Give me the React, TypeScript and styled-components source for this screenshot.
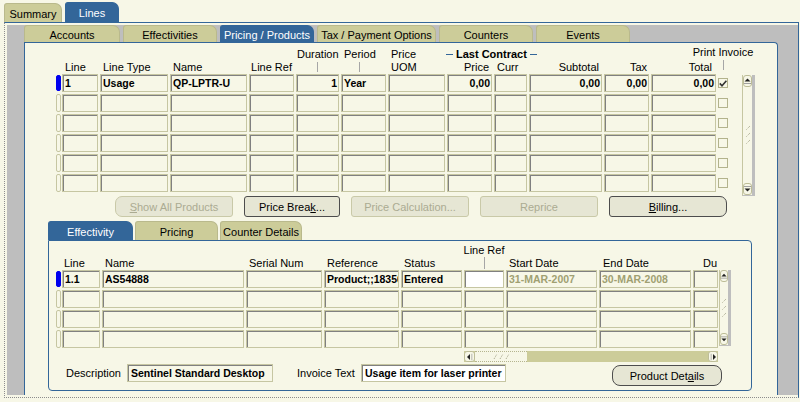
import React from "react";
import styled, { createGlobalStyle } from "styled-components";

const cream = "#f7f7e7";
const khaki = "#cccc99";
const blue = "#336699";
const gray = "#bebebe";
const edge = "#c6c6a2";
const shade = "#808080";

const UPPER_COLS = "4px 36px 68px 77px 45px 43px 45px 57px 45px 33px 73px 45px 65px 10px";
const LOWER_COLS = "4px 38px 142px 76px 75px 61px 40px 91px 92px 25px";

type CellData = { text?: string; right?: boolean; muted?: boolean; white?: boolean };

const UPPER_FIRST: CellData[] = [
  { text: "1" },
  { text: "Usage" },
  { text: "QP-LPTR-U" },
  {},
  { text: "1", right: true },
  { text: "Year" },
  {},
  { text: "0,00", right: true },
  {},
  { text: "0,00", right: true },
  { text: "0,00", right: true },
  { text: "0,00", right: true },
];
const UPPER_BLANK: CellData[] = Array.from({ length: 12 }, () => ({}));

const LOWER_FIRST: CellData[] = [
  { text: "1.1" },
  { text: "AS54888" },
  {},
  { text: "Product;;18356" },
  { text: "Entered" },
  { white: true },
  { text: "31-MAR-2007", muted: true },
  { text: "30-MAR-2008", muted: true },
  {},
];
const LOWER_BLANK: CellData[] = Array.from({ length: 9 }, () => ({}));

const TOP_TABS = [
  { label: "Summary", w: 58, h: 19 },
  { label: "Lines", w: 54, h: 20, active: true },
];
const MAIN_TABS = [
  { label: "Accounts", w: 96 },
  { label: "Effectivities", w: 94 },
  { label: "Pricing / Products", w: 94, active: true },
  { label: "Tax / Payment Options", w: 119 },
  { label: "Counters", w: 94 },
  { label: "Events", w: 94 },
];
const SUB_TABS = [
  { label: "Effectivity", w: 85, active: true },
  { label: "Pricing", w: 83 },
  { label: "Counter Details", w: 82 },
];

const GlobalStyle = createGlobalStyle`
  * { box-sizing: border-box; }
  html, body { margin: 0; padding: 0; background: ${cream}; }
  body {
    font-family: "Liberation Sans", Arial, Helvetica, sans-serif;
    font-size: 11px;
    color: #000;
  }
`;

const Page = styled.div`
  width: 800px;
  height: 402px;
  padding: 2px 0 0 4px;
  overflow: hidden;
`;

const TabStrip = styled.div<{ $h: number; $gap: number; $indent?: number; $top?: number }>`
  display: flex;
  align-items: flex-end;
  gap: ${(p) => p.$gap}px;
  height: ${(p) => p.$h}px;
  margin: ${(p) => p.$top ?? 0}px 0 0 ${(p) => p.$indent ?? 0}px;
  flex-shrink: 0;
`;

const Tab = styled.div<{ $w: number; $h: number; $active?: boolean }>`
  display: flex;
  align-items: center;
  justify-content: center;
  width: ${(p) => p.$w}px;
  height: ${(p) => p.$h}px;
  padding-top: 1px;
  background: ${(p) => (p.$active ? blue : khaki)};
  color: ${(p) => (p.$active ? "#fff" : "#000")};
  border: 1px solid ${(p) => (p.$active ? blue : "#b9b98c")};
  border-bottom: none;
  border-radius: 3px 7px 0 0;
  white-space: nowrap;
`;

const Frame = styled.div`
  display: flex;
  width: 795px;
  height: 376px;
  padding: 2px 0 2px 2px;
  border-top: 1px solid ${blue};
  border-right: 1px solid ${blue};
  border-left: 1px dotted #8c8c8c;
  border-bottom: 1px dotted #8c8c8c;
`;

const Backdrop = styled.div`
  flex: 1;
  display: flex;
  flex-direction: column;
  padding: 0 20px 0 17px;
  background: ${gray};
`;

const Panel = styled.div`
  flex: 1;
  display: flex;
  flex-direction: column;
  background: ${cream};
  border: 1px solid ${blue};
  border-bottom: none;
  border-top-right-radius: 4px;
`;

const HeadGrid = styled.div<{ $cols: string; $indent: number; $h: number; $top: number }>`
  display: grid;
  grid-template-columns: ${(p) => p.$cols};
  grid-template-rows: 13px 13px;
  column-gap: 2px;
  height: ${(p) => p.$h}px;
  padding-top: ${(p) => p.$top}px;
  margin-left: ${(p) => p.$indent}px;
  flex-shrink: 0;
`;

const Head = styled.div<{ $col: number; $row?: number; $right?: boolean; $pad?: number }>`
  grid-column: ${(p) => p.$col};
  grid-row: ${(p) => p.$row ?? 2};
  justify-self: ${(p) => (p.$right ? "end" : "start")};
  ${(p) => (p.$right ? "padding-right" : "padding-left")}: ${(p) => p.$pad ?? 3}px;
  line-height: 13px;
  white-space: nowrap;
`;

const Stack = styled.div<{ $col: number; $pad?: number; $center?: boolean; $lift?: number }>`
  grid-column: ${(p) => p.$col};
  grid-row: 1 / span 2;
  justify-self: ${(p) => (p.$center ? "center" : "start")};
  margin-left: ${(p) => p.$pad ?? 0}px;
  margin-top: ${(p) => -(p.$lift ?? 0)}px;
  display: flex;
  flex-direction: column;
  align-items: center;
  line-height: 13px;
  white-space: nowrap;
`;

const Tick = styled.span<{ $h?: number; $gap?: number }>`
  width: 1px;
  height: ${(p) => p.$h ?? 10}px;
  margin-top: ${(p) => p.$gap ?? 1}px;
  background: #a6a6a6;
`;

const Group = styled.div<{ $col: number }>`
  grid-column: ${(p) => p.$col} / span 2;
  grid-row: 1;
  justify-self: start;
  margin-left: -1px;
  display: flex;
  align-items: center;
  gap: 3px;
  font-weight: bold;
  line-height: 13px;
  white-space: nowrap;
`;

const Dash = styled.span`
  width: 7px;
  height: 1px;
  background: ${blue};
`;

const TableBody = styled.div<{ $indent: number }>`
  display: flex;
  align-items: flex-start;
  margin-left: ${(p) => p.$indent}px;
  flex-shrink: 0;
`;

const Rows = styled.div`
  display: flex;
  flex-direction: column;
  gap: 2px;
`;

const RowGrid = styled.div<{ $cols: string }>`
  display: grid;
  grid-template-columns: ${(p) => p.$cols};
  column-gap: 2px;
  height: 18px;
`;

const Marker = styled.div<{ $on?: boolean }>`
  width: 5px;
  height: ${(p) => (p.$on ? 16 : 18)}px;
  align-self: center;
  border: 1px solid ${(p) => (p.$on ? "#0000ee" : edge)};
  border-radius: 2px;
  background: ${(p) => (p.$on ? "#0000ee" : cream)};
`;

const Cell = styled.div<{ $right?: boolean; $muted?: boolean; $white?: boolean }>`
  height: 18px;
  padding: 0 1px 0 2px;
  border: 1px solid ${edge};
  box-shadow: inset 1px 1px 0 ${shade};
  background: ${(p) => (p.$white ? "#fff" : cream)};
  color: ${(p) => (p.$muted ? "#a0a072" : "#000")};
  font-size: 10.5px;
  font-weight: bold;
  line-height: 16px;
  text-align: ${(p) => (p.$right ? "right" : "left")};
  white-space: nowrap;
  overflow: hidden;
`;

const Check = styled.div`
  width: 10px;
  height: 10px;
  align-self: center;
  display: flex;
  align-items: center;
  justify-content: center;
  border: 1px solid #b3b38c;
  background: ${cream};
`;

const VScroll = styled.div<{ $w: number; $h: number; $left: number; $top?: number }>`
  display: flex;
  flex-direction: column;
  flex-shrink: 0;
  width: ${(p) => p.$w}px;
  height: ${(p) => p.$h}px;
  margin: ${(p) => p.$top ?? 0}px 0 0 ${(p) => p.$left}px;
  background: ${cream};
  border-left: 1px solid ${edge};
  border-right: 3px solid ${gray};
  border-bottom: 1px solid ${gray};
`;

const ArrowBox = styled.div<{ $w?: number; $h: number }>`
  display: flex;
  align-items: center;
  justify-content: center;
  flex-shrink: 0;
  width: ${(p) => (p.$w ? `${p.$w}px` : "100%")};
  height: ${(p) => p.$h}px;
  background: ${cream};
  border: 1px solid #bdbd98;
  border-radius: 3px;
`;

const Track = styled.div`
  flex: 1;
  display: flex;
  align-items: center;
  justify-content: center;
`;

const HScroll = styled.div`
  display: flex;
  width: 254px;
  height: 11px;
  margin: 3px 0 0 415px;
  background: ${khaki};
  flex-shrink: 0;
`;

const HThumb = styled.div`
  display: flex;
  align-items: center;
  justify-content: center;
  width: 52px;
  background: ${cream};
  border-top: 1px dotted #b5b58f;
  border-bottom: 1px dotted #b5b58f;
`;

const ArrowSvg = styled.svg<{ $rot: number }>`
  display: block;
  transform: rotate(${(p) => p.$rot}deg);
`;

const ButtonBar = styled.div<{ $indent: number }>`
  display: flex;
  gap: 11px;
  height: 21px;
  margin-left: ${(p) => p.$indent}px;
  flex-shrink: 0;
`;

const Button = styled.button<{ $w: number; $off?: boolean; $radius?: string; $left?: number; $top?: number }>`
  width: ${(p) => p.$w}px;
  height: 21px;
  margin: ${(p) => p.$top ?? 0}px 0 0 ${(p) => p.$left ?? 0}px;
  padding: 0;
  font-family: inherit;
  font-size: 11px;
  color: ${(p) => (p.$off ? "#abab92" : "#000")};
  background: #e6e6d4;
  border: 1px solid ${(p) => (p.$off ? "#c9c9a8" : "#4d4d4d")};
  border-radius: ${(p) => p.$radius ?? "3px"};
  flex-shrink: 0;
  cursor: default;
`;

const SubPanel = styled.div`
  display: flex;
  flex-direction: column;
  width: 704px;
  height: 151px;
  margin-left: 23px;
  border: 1px solid ${blue};
  border-radius: 0 4px 4px 4px;
  flex-shrink: 0;
`;

const Footer = styled.div`
  display: flex;
  align-items: flex-start;
  margin-top: 2px;
`;

const Label = styled.div<{ $w: number; $left?: number }>`
  width: ${(p) => p.$w}px;
  margin-left: ${(p) => p.$left ?? 0}px;
  line-height: 18px;
  text-align: right;
  white-space: nowrap;
`;

const Field = styled(Cell)<{ $w: number; $left: number }>`
  width: ${(p) => p.$w}px;
  margin-left: ${(p) => p.$left}px;
  padding-left: 3px;
  flex-shrink: 0;
`;

const Arrow = ({ rot }: { rot: number }) => (
  <ArrowSvg $rot={rot} width="7" height="6" viewBox="0 0 7 6">
    <path d="M0.5 3.5 L3.5 0.5 L6.5 3.5 Z" fill="#222" />
    <rect x="0" y="5" width="7" height="1" fill="#a0a0a0" />
  </ArrowSvg>
);

const GripV = () => (
  <svg width="6" height="20" viewBox="0 0 6 20">
    <path
      d="M5 1 L1 5 M5 8 L1 12 M5 15 L1 19"
      stroke="#a3a388"
      strokeWidth="1"
      strokeDasharray="1 1"
      fill="none"
    />
  </svg>
);

const GripH = () => (
  <svg width="18" height="7" viewBox="0 0 18 7">
    <path
      d="M2 6 L5 1 M8 6 L11 1 M14 6 L17 1"
      stroke="#a3a388"
      strokeWidth="1"
      strokeDasharray="1 1"
      fill="none"
    />
  </svg>
);

const CheckMark = () => (
  <svg width="8" height="7" viewBox="0 0 8 7">
    <path d="M0.8 3.4 L3 5.8 L7.4 0.8" fill="none" stroke="#333" strokeWidth="1.6" />
  </svg>
);

const Scrollbar = ({ w, h, left, top }: { w: number; h: number; left: number; top?: number }) => (
  <VScroll $w={w} $h={h} $left={left} $top={top}>
    <ArrowBox $h={12}>
      <Arrow rot={0} />
    </ArrowBox>
    <Track>
      <GripV />
    </Track>
    <ArrowBox $h={12}>
      <Arrow rot={180} />
    </ArrowBox>
  </VScroll>
);

const App = () => {
  return (
    <>
      <GlobalStyle />
      <Page>
        <TabStrip $h={20} $gap={3}>
          {TOP_TABS.map((t) => (
            <Tab key={t.label} $w={t.w} $h={t.h} $active={t.active}>
              {t.label}
            </Tab>
          ))}
        </TabStrip>
        <Frame>
          <Backdrop>
            <TabStrip $h={17} $gap={3}>
              {MAIN_TABS.map((t) => (
                <Tab key={t.label} $w={t.w} $h={17} $active={t.active}>
                  {t.label}
                </Tab>
              ))}
            </TabStrip>
            <Panel>
              <HeadGrid $cols={UPPER_COLS} $indent={31} $h={31} $top={5}>
                <Head $col={2}>Line</Head>
                <Head $col={3}>Line Type</Head>
                <Head $col={4}>Name</Head>
                <Head $col={5} $right $pad={2}>
                  Line Ref
                </Head>
                <Stack $col={6} $pad={1}>
                  Duration
                  <Tick />
                </Stack>
                <Stack $col={7} $pad={3}>
                  Period
                  <Tick />
                </Stack>
                <Head $col={8} $row={1}>
                  Price
                </Head>
                <Head $col={8}>UOM</Head>
                <Group $col={9}>
                  <Dash />
                  Last Contract
                  <Dash />
                </Group>
                <Head $col={9} $right>
                  Price
                </Head>
                <Head $col={10}>Curr</Head>
                <Head $col={11} $right>
                  Subtotal
                </Head>
                <Head $col={12} $right $pad={2}>
                  Tax
                </Head>
                <Head $col={13} $right $pad={4}>
                  Total
                </Head>
                <Stack $col={14} $center $lift={2}>
                  Print Invoice
                  <Tick />
                </Stack>
              </HeadGrid>

              <TableBody $indent={31}>
                <Rows>
                  {Array.from({ length: 6 }, (_, i) => (
                    <RowGrid key={i} $cols={UPPER_COLS}>
                      <Marker $on={i === 0} />
                      {(i === 0 ? UPPER_FIRST : UPPER_BLANK).map((c, j) => (
                        <Cell key={j} $right={c.right}>
                          {c.text}
                        </Cell>
                      ))}
                      <Check>{i === 0 && <CheckMark />}</Check>
                    </RowGrid>
                  ))}
                </Rows>
                <Scrollbar w={13} h={121} left={14} top={1} />
              </TableBody>

              <ButtonBar $indent={90}>
                <Button $w={118} $off $radius="7px 3px 3px 7px">
                  <u>S</u>how All Products
                </Button>
                <Button $w={96}>
                  Price Brea<u>k</u>...
                </Button>
                <Button $w={118} $off>
                  Price Calculation...
                </Button>
                <Button $w={118} $off>
                  Reprice
                </Button>
                <Button $w={118} $radius="3px 7px 7px 3px">
                  <u>B</u>illing...
                </Button>
              </ButtonBar>

              <TabStrip $h={19} $gap={2} $indent={23} $top={4}>
                {SUB_TABS.map((t) => (
                  <Tab key={t.label} $w={t.w} $h={19} $active={t.active}>
                    {t.label}
                  </Tab>
                ))}
              </TabStrip>

              <SubPanel>
                <HeadGrid $cols={LOWER_COLS} $indent={7} $h={29} $top={3}>
                  <Head $col={2} $pad={2}>
                    Line
                  </Head>
                  <Head $col={3}>Name</Head>
                  <Head $col={4}>Serial Num</Head>
                  <Head $col={5}>Reference</Head>
                  <Head $col={6}>Status</Head>
                  <Stack $col={7} $center>
                    Line Ref
                    <Tick $h={12} $gap={0} />
                  </Stack>
                  <Head $col={8}>Start Date</Head>
                  <Head $col={9} $pad={4}>
                    End Date
                  </Head>
                  <Head $col={10} $right $pad={1}>
                    Du
                  </Head>
                </HeadGrid>

                <TableBody $indent={7}>
                  <Rows>
                    {Array.from({ length: 4 }, (_, i) => (
                      <RowGrid key={i} $cols={LOWER_COLS}>
                        <Marker $on={i === 0} />
                        {(i === 0 ? LOWER_FIRST : LOWER_BLANK).map((c, j) => (
                          <Cell key={j} $right={c.right} $muted={c.muted} $white={c.white}>
                            {c.text}
                          </Cell>
                        ))}
                      </RowGrid>
                    ))}
                  </Rows>
                  <Scrollbar w={12} h={76} left={1} />
                </TableBody>

                <HScroll>
                  <ArrowBox $w={11} $h={11}>
                    <Arrow rot={270} />
                  </ArrowBox>
                  <HThumb>
                    <GripH />
                  </HThumb>
                  <Track />
                  <ArrowBox $w={10} $h={11}>
                    <Arrow rot={90} />
                  </ArrowBox>
                </HScroll>

                <Footer>
                  <Label $w={72}>Description</Label>
                  <Field $w={146} $left={6}>
                    Sentinel Standard Desktop
                  </Field>
                  <Label $w={56} $left={24}>
                    Invoice Text
                  </Label>
                  <Field $w={145} $left={8} $white>
                    Usage item for laser printer
                  </Field>
                  <Button $w={110} $left={106} $top={1} $radius="8px">
                    Product Det<u>a</u>ils
                  </Button>
                </Footer>
              </SubPanel>
            </Panel>
          </Backdrop>
        </Frame>
      </Page>
    </>
  );
};

export default App;
